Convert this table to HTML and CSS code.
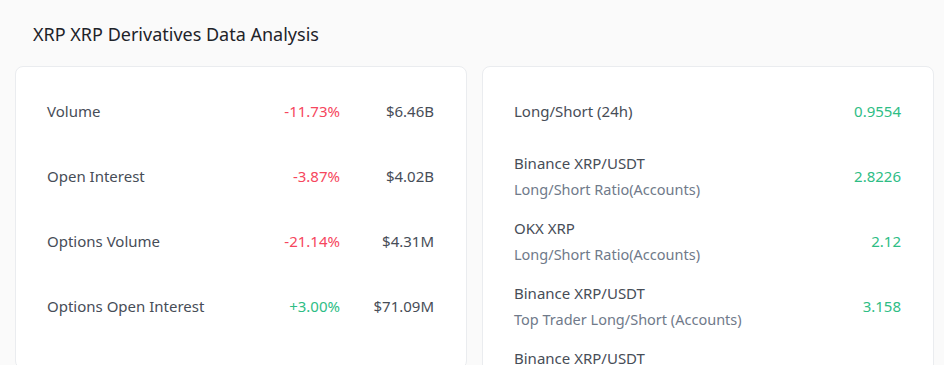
FILE: index.html
```html
<!DOCTYPE html>
<html lang="en">
<head>
<meta charset="utf-8">
<title>XRP Derivatives Data Analysis</title>
<link rel="stylesheet" href="styles.css">
</head>
<body>
<div class="page">
  <h2 class="title">XRP XRP Derivatives Data Analysis</h2>
  <div class="cards">
    <div class="card">
      <div class="row">
        <div class="label">Volume</div>
        <div class="pct down">-11.73%</div>
        <div class="val">$6.46B</div>
      </div>
      <div class="row">
        <div class="label">Open Interest</div>
        <div class="pct down">-3.87%</div>
        <div class="val">$4.02B</div>
      </div>
      <div class="row">
        <div class="label">Options Volume</div>
        <div class="pct down">-21.14%</div>
        <div class="val">$4.31M</div>
      </div>
      <div class="row">
        <div class="label">Options Open Interest</div>
        <div class="pct up">+3.00%</div>
        <div class="val">$71.09M</div>
      </div>
    </div>
    <div class="card">
      <div class="row">
        <div class="label">Long/Short (24h)</div>
        <div class="ratio">0.9554</div>
      </div>
      <div class="row">
        <div class="label"><div>Binance XRP/USDT</div><div class="sub">Long/Short Ratio(Accounts)</div></div>
        <div class="ratio">2.8226</div>
      </div>
      <div class="row">
        <div class="label"><div>OKX XRP</div><div class="sub">Long/Short Ratio(Accounts)</div></div>
        <div class="ratio">2.12</div>
      </div>
      <div class="row">
        <div class="label"><div>Binance XRP/USDT</div><div class="sub">Top Trader Long/Short (Accounts)</div></div>
        <div class="ratio">3.158</div>
      </div>
      <div class="row">
        <div class="label"><div>Binance XRP/USDT</div><div class="sub">Top Trader Long/Short (Positions)</div></div>
        <div class="ratio">1.9231</div>
      </div>
    </div>
  </div>
</div>
</body>
</html>
```
FILE: styles.css
```css
html, body {
  margin: 0;
  padding: 0;
  background: #fafafa;
  font-family: "Noto Sans", "Open Sans", sans-serif;
  color: #474d57;
  overflow: hidden;
  height: 365px;
}
.page {
  padding: 20px 10px 0 15px;
}
.title {
  margin: 0 0 18px 18px;
  font-size: 18px;
  line-height: 28px;
  font-weight: 400;
  color: #1e2329;
}
.cards {
  display: grid;
  grid-template-columns: 452px 452px;
  gap: 15px;
  align-items: start;
}
.card {
  background: #fff;
  border: 1px solid #eaecef;
  border-radius: 8px;
  padding: 11px 32px 30px 31px;
}
.row {
  height: 65px;
  display: flex;
  align-items: center;
  font-size: 15px;
  line-height: 26px;
}
.label {
  flex: 1;
}
.sub {
  font-size: 14.5px;
  color: #707a8a;
}
.pct {
  text-align: right;
}
.val {
  width: 94px;
  text-align: right;
}
.down { color: #f6465d; }
.up { color: #2ebd85; }
.ratio {
  color: #2ebd85;
  text-align: right;
}
```
